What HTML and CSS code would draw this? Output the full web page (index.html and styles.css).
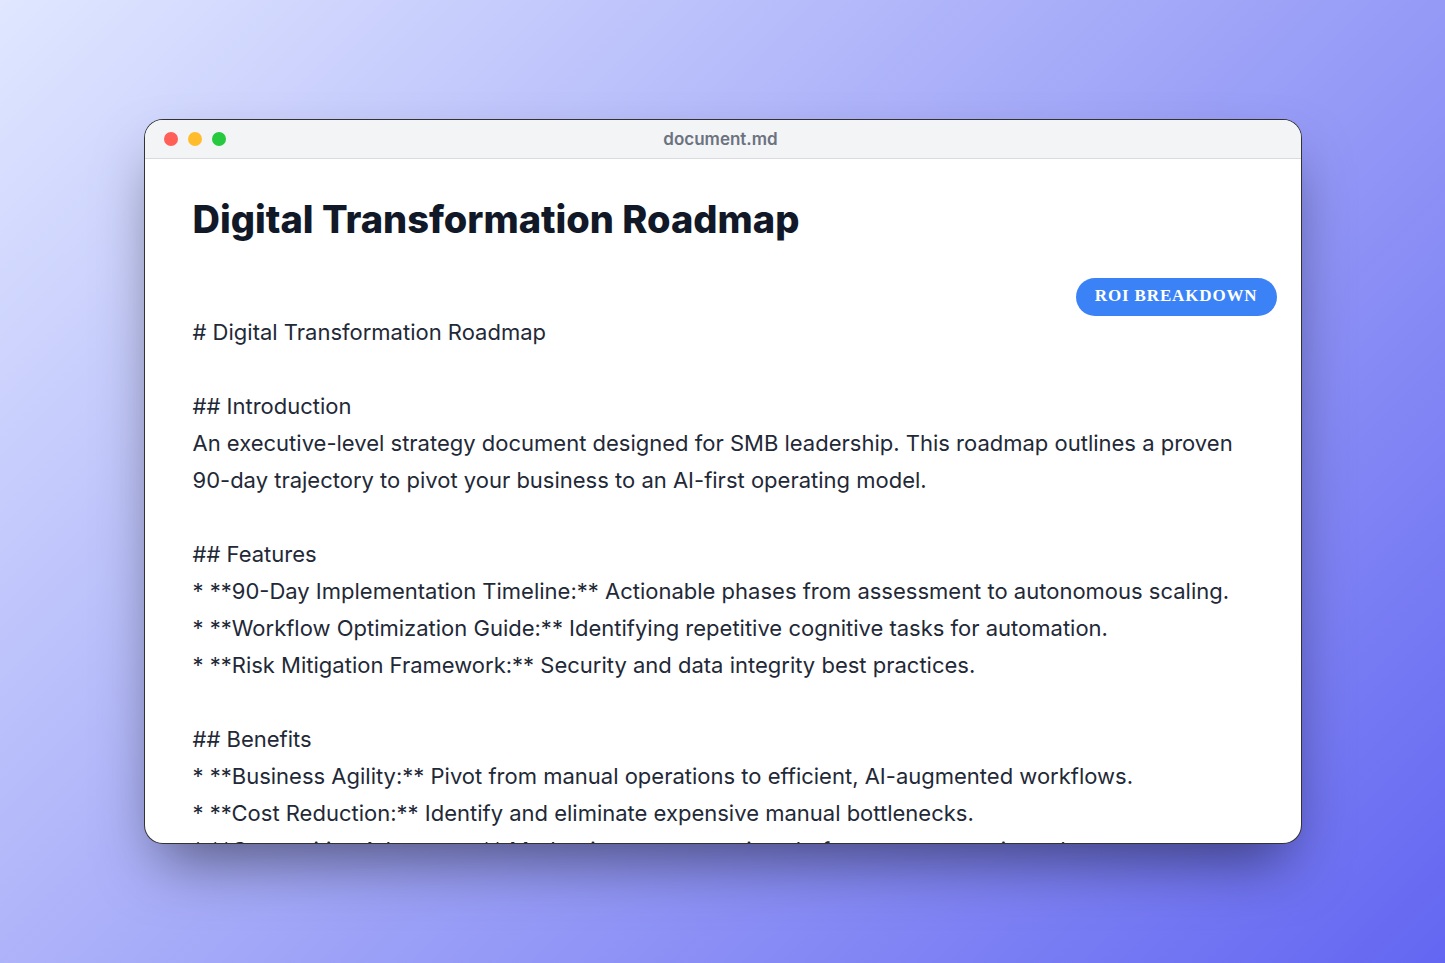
FILE: index.html
```html
<!DOCTYPE html>
<html lang="en">
<head>
  <meta charset="UTF-8">
  <title>Digital Transformation Roadmap</title>
  <link rel="stylesheet" href="styles.css">
</head>
<body>

  <div class="window">
    <div class="titlebar">
      <div class="dots">
        <span class="dot red"></span>
        <span class="dot yellow"></span>
        <span class="dot green"></span>
      </div>
      <div class="filename">document.md</div>
    </div>

    <div class="content">
      <h1>Digital Transformation Roadmap</h1>
      <div class="badge">ROI BREAKDOWN</div>
      <div class="markdown"># Digital Transformation Roadmap

## Introduction
An executive-level strategy document designed for SMB leadership. This roadmap outlines a proven 90-day trajectory to pivot your business to an AI-first operating model.

## Features
* **90-Day Implementation Timeline:** Actionable phases from assessment to autonomous scaling.
* **Workflow Optimization Guide:** Identifying repetitive cognitive tasks for automation.
* **Risk Mitigation Framework:** Security and data integrity best practices.

## Benefits
* **Business Agility:** Pivot from manual operations to efficient, AI-augmented workflows.
* **Cost Reduction:** Identify and eliminate expensive manual bottlenecks.
* **Competitive Advantage:** Modernize your operations before your competitors do.</div>
    </div>
  </div>

</body>
</html>
```

FILE: styles.css
```css
* {
  box-sizing: border-box;
}
body {
  margin: 0;
  height: 100vh;
  display: flex;
  align-items: center;
  justify-content: center;
  background: linear-gradient(135deg, #e0e7ff 0%, #6366f1 100%);
  font-family: Inter, sans-serif;
}
.window {
  width: 80vw;
  height: 75vh;
  display: flex;
  flex-direction: column;
  background: #fff;
  border-radius: 18px;
  box-shadow: 0 0 0 1px #333, 0 30px 60px -14px rgba(0, 0, 0, 0.5);
  overflow: hidden;
}
.titlebar {
  display: flex;
  align-items: center;
  flex: none;
  height: 39px;
  padding: 0 19px;
  background: #f3f4f6;
  border-bottom: 1px solid #d9dbdf;
}
.dots {
  display: flex;
  gap: 10px;
  width: 62px;
}
.dot {
  width: 14px;
  height: 14px;
  border-radius: 50%;
}
.red {
  background: #ff5f56;
}
.yellow {
  background: #ffbd2e;
}
.green {
  background: #27c93f;
}
.filename {
  flex: 1;
  padding-right: 66px;
  text-align: center;
  font-size: 17px;
  font-weight: 600;
  color: #6b7280;
}
.content {
  display: flex;
  flex-direction: column;
  flex: 1;
  min-height: 0;
  padding: 36px 48px 0;
  overflow: hidden;
}
h1 {
  margin: 0;
  font-size: 38px;
  line-height: 48px;
  font-weight: 800;
  color: #111827;
}
.badge {
  align-self: flex-end;
  flex: none;
  height: 38px;
  margin: 35px -24px -2px 0;
  padding: 0 19px;
  border-radius: 19px;
  background: #3b82f6;
  color: #fff;
  font-family: "Liberation Serif", serif;
  font-size: 17px;
  line-height: 36px;
  font-weight: bold;
  letter-spacing: 0.05em;
}
.markdown {
  font-size: 22px;
  line-height: 37px;
  color: #1f2937;
  white-space: pre-wrap;
}
```
